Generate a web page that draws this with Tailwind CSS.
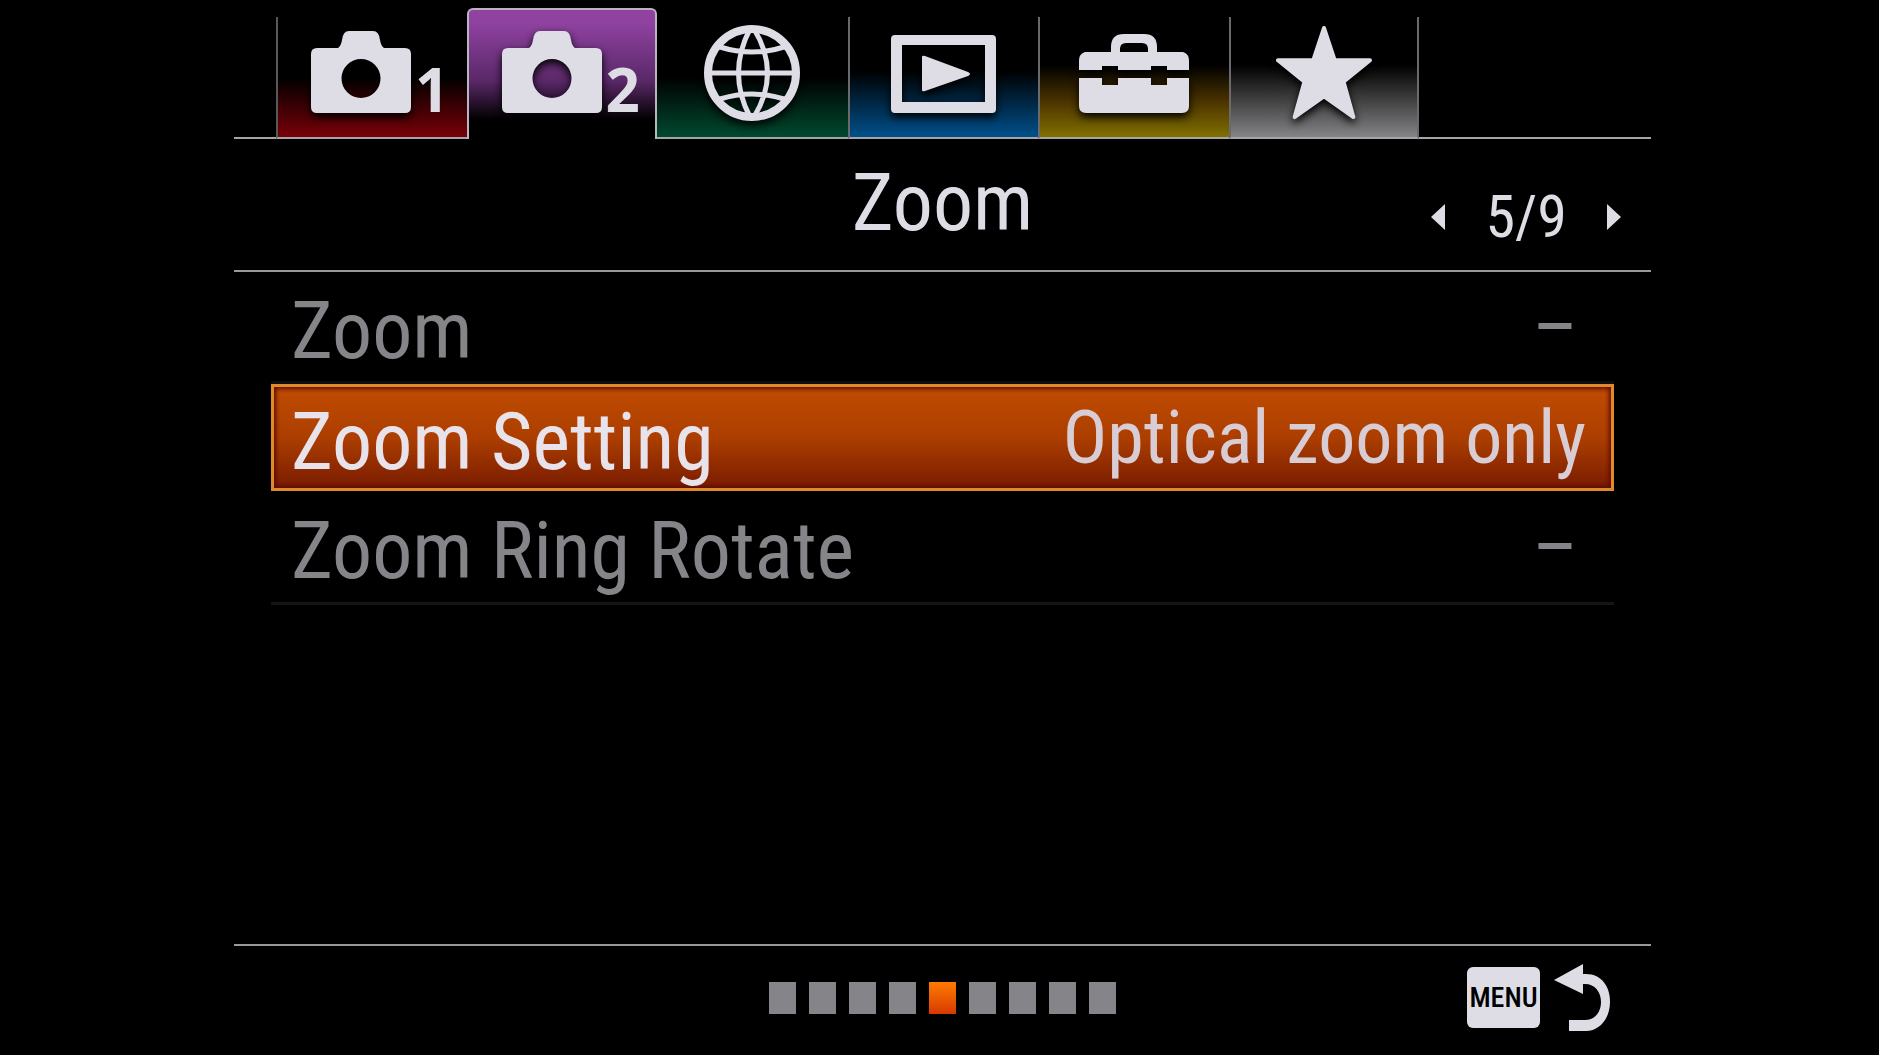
<!DOCTYPE html>
<html lang="en">
<head>
    <meta charset="UTF-8">
    <meta name="viewport" content="width=device-width, initial-scale=1.0">
    <title>Camera Menu</title>
    <script src="https://cdn.jsdelivr.net/npm/@tailwindcss/browser@4"></script>
</head>
<body class="bg-black font-['Roboto_Condensed','Liberation_Sans_Narrow','Liberation_Sans',sans-serif] text-[#dedde6]">

    <div class="flex min-h-screen flex-col pl-[234px] pr-[228px]">

        <!-- Tabs -->
        <nav class="grid h-[139px] grid-cols-[84fr_381fr_381fr_381fr_381fr_381fr_381fr_464fr] items-end">
            <div class="border-b-2 border-[#a5a5a8]"></div>

            <button aria-label="Camera settings 1" class="flex h-[122px] items-end gap-1 border-b-2 border-l-2 border-b-[#a5a5a8] border-l-[#58585a] bg-linear-to-b/srgb from-black from-50% to-[#780008] pb-6 pl-[33px]">
                <svg class="h-[82px] w-[100px] shrink-0 drop-shadow-[0_4px_4px_black]" viewBox="0 0 100 82" fill="#dedde6">
                    <path fill-rule="evenodd" d="M6 17H27Q30 15 31 9Q32 0 38 0H62Q68 0 69 9Q70 15 73 17H94Q100 17 100 23V76Q100 82 94 82H6Q0 82 0 76V23Q0 17 6 17ZM50 28A19.500 19.500 0 1 0 50 67A19.500 19.500 0 1 0 50 28Z"/>
                </svg>
                <span class="font-['Open_Sans','Noto_Sans',sans-serif] text-[60px] leading-[48px] font-bold">1</span>
            </button>

            <button aria-label="Camera settings 2" aria-current="page" class="flex h-[131px] items-end gap-1 rounded-t-md border-x-2 border-t-2 border-[#b9b4bf] bg-linear-to-b/srgb from-[#8f42a0] from-10% via-[#5a2868] via-55% to-black to-85% pb-[26px] pl-[33px]">
                <svg class="h-[82px] w-[100px] shrink-0 drop-shadow-[0_4px_4px_black]" viewBox="0 0 100 82" fill="#dedde6">
                    <path fill-rule="evenodd" d="M6 17H27Q30 15 31 9Q32 0 38 0H62Q68 0 69 9Q70 15 73 17H94Q100 17 100 23V76Q100 82 94 82H6Q0 82 0 76V23Q0 17 6 17ZM50 28A19.500 19.500 0 1 0 50 67A19.500 19.500 0 1 0 50 28Z"/>
                </svg>
                <span class="font-['Open_Sans','Noto_Sans',sans-serif] text-[60px] leading-[48px] font-bold">2</span>
            </button>

            <button aria-label="Network" class="flex h-[122px] items-end justify-center border-b-2 border-[#a5a5a8] bg-linear-to-b/srgb from-black from-50% to-[#00492f] pb-4">
                <svg class="size-24 drop-shadow-[0_4px_4px_black]" viewBox="0 0 96 96" fill="none" stroke="#dedde6" stroke-width="5">
                    <circle cx="48" cy="48" r="44" stroke-width="8"/>
                    <path d="M4 48H92M16 22Q48 32 80 22M16 74Q48 64 80 74M46 4Q23 48 46 92M50 4Q77 48 50 92"/>
                </svg>
            </button>

            <button aria-label="Playback" class="flex h-[122px] items-end justify-center border-b-2 border-l-2 border-b-[#a5a5a8] border-l-[#6a6a6c] bg-linear-to-b/srgb from-black from-45% to-[#00508c] pb-6">
                <svg class="h-[78px] w-[105px] drop-shadow-[0_4px_4px_black]" viewBox="0 0 105 78" fill="#dedde6">
                    <path fill-rule="evenodd" d="M4 0H101Q105 0 105 4V74Q105 78 101 78H4Q0 78 0 74V4Q0 0 4 0ZM11 10V67H94V10Z"/>
                    <path d="M31 22Q31 20 34 21L77 37Q81 39 77 41L34 56Q31 57 31 55Z"/>
                </svg>
            </button>

            <button aria-label="Setup" class="flex h-[122px] items-end justify-center border-b-2 border-l-2 border-b-[#a5a5a8] border-l-[#6a6a6c] bg-linear-to-b/srgb from-black from-40% via-[#4a3200] via-70% to-[#807000] pb-6">
                <svg class="h-[79px] w-[110px] drop-shadow-[0_4px_4px_black]" viewBox="0 0 110 79" fill="#dedde6">
                    <path fill-rule="evenodd" d="M32 18V13Q32 0 45 0H65Q78 0 78 13V18H104Q110 20 110 26V36H88V32H72V36H39V32H23V36H0V26Q0 20 6 18ZM41 18H69V15Q69 9 63 9H47Q41 9 41 15Z"/>
                    <path d="M0 44H23V51H39V44H72V51H88V44H110V72Q110 79 103 79H7Q0 79 0 72Z"/>
                </svg>
            </button>

            <button aria-label="My Menu" class="flex h-[122px] items-end justify-center border-x-2 border-b-2 border-x-[#6a6a6c] border-b-[#a5a5a8] bg-linear-to-b/srgb from-black from-40% to-[#848486] pb-4">
                <svg class="size-24 drop-shadow-[0_4px_4px_black]" viewBox="0 0 98 98" fill="#dedde6" stroke="#dedde6" stroke-width="4" stroke-linejoin="round">
                    <path d="M49 3L60 36H96L69 58L79 94L49 73L19 94L29 58L2 36H38Z"/>
                </svg>
            </button>

            <div class="border-b-2 border-[#a5a5a8]"></div>
        </nav>

        <!-- Page title -->
        <header class="grid h-[133px] grid-cols-[1fr_auto_1fr] items-center border-b-2 border-[#99999b]">
            <h1 class="col-start-2 pb-1 text-[80px] leading-[120px]">Zoom</h1>
            <div class="flex items-center justify-end gap-10 pt-6 pr-[30px]">
                <button aria-label="Previous page">
                    <svg class="h-[26px] w-[14px]" viewBox="0 0 14 26" fill="#dedde6"><path d="M14 0V26L0 13Z"/></svg>
                </button>
                <span class="text-[60px] leading-[80px]">5/9</span>
                <button aria-label="Next page">
                    <svg class="h-[26px] w-[14px]" viewBox="0 0 14 26" fill="#dedde6"><path d="M0 0V26L14 13Z"/></svg>
                </button>
            </div>
        </header>

        <!-- Menu items -->
        <main class="flex-1 pr-[37px] pl-[37px]">
            <button disabled class="flex h-[112px] w-full items-center justify-between border-b-3 border-[#0e0e10] pr-7 pl-[20px] text-[80px] leading-[100px] text-[#858488]">
                <span class="pt-2">Zoom</span>
                <span class="px-2">–</span>
            </button>
            <button class="flex h-[107px] w-full items-center justify-between border-3 border-[#e08a2c] bg-linear-to-b/srgb from-[#c04c00] via-[#ac3e00] via-50% to-[#7a1c00] pr-[25px] pl-[17px] text-[80px] leading-[92px] text-[#e8e2ea] inset-shadow-[0_0_4px_2px_#5c0c00]">
                <span class="pt-2">Zoom Setting</span>
                <span class="text-[74px] text-[#d8cdd4]">Optical zoom only</span>
            </button>
            <button disabled class="flex h-[114px] w-full items-center justify-between border-b-3 border-[#151517] pr-7 pl-[20px] text-[80px] leading-[100px] text-[#858488]">
                <span class="pt-2">Zoom Ring Rotate</span>
                <span class="px-2">–</span>
            </button>
        </main>

        <!-- Page indicator and back button -->
        <footer class="grid h-[111px] grid-cols-[1fr_auto_1fr] items-center border-t-2 border-[#99999b] pb-[6px]">
            <div class="col-start-2 flex gap-[13px]">
                <i class="h-8 w-[27px] bg-[#858488]"></i>
                <i class="h-8 w-[27px] bg-[#858488]"></i>
                <i class="h-8 w-[27px] bg-[#858488]"></i>
                <i class="h-8 w-[27px] bg-[#858488]"></i>
                <i class="h-8 w-[27px] bg-linear-to-b from-[#ff7a00] to-[#d83800]"></i>
                <i class="h-8 w-[27px] bg-[#858488]"></i>
                <i class="h-8 w-[27px] bg-[#858488]"></i>
                <i class="h-8 w-[27px] bg-[#858488]"></i>
                <i class="h-8 w-[27px] bg-[#858488]"></i>
            </div>
            <button aria-label="Menu: back" class="flex items-center gap-[14px] justify-self-end pr-[41px]">
                <span class="flex h-[61px] w-[73px] items-center justify-center rounded-md bg-[#dedde6] text-[28px] leading-10 font-medium text-black">MENU</span>
                <svg class="h-[68px] w-[56px]" viewBox="0 0 56 68" fill="#dedde6">
                    <path d="M0 16L29 0V10H32C48 10 56 23 56 38C56 54 46 67 32 67H15V56H31C41 56 47 48 47 38C47 28 41 20 31 20H29V30Z"/>
                </svg>
            </button>
        </footer>

    </div>

</body>
</html>
